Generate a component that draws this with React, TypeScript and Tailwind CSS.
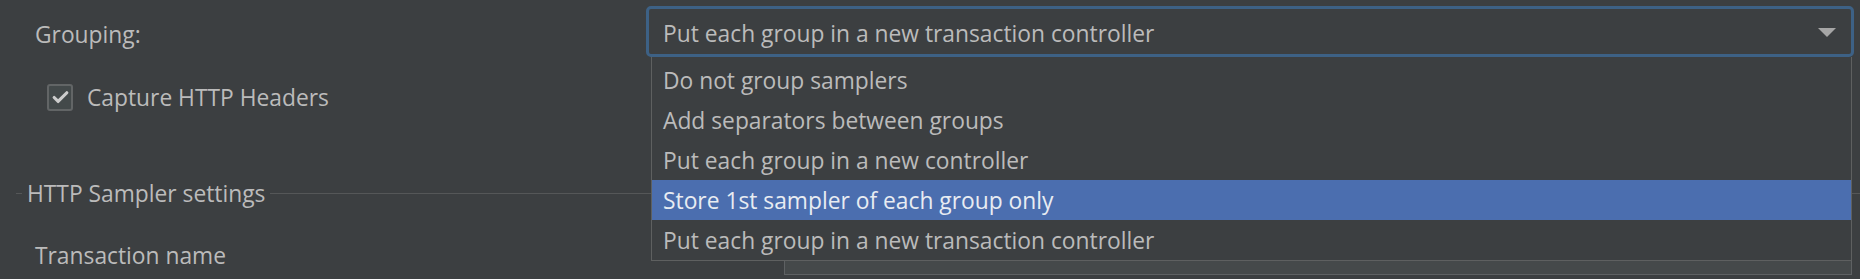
import { Check } from "lucide-react";

const options = [
  "Do not group samplers",
  "Add separators between groups",
  "Put each group in a new controller",
  "Store 1st sampler of each group only",
  "Put each group in a new transaction controller",
];

const font = { fontFamily: '"Open Sans", "Noto Sans", sans-serif' };

export default function App() {
  const selected = 3;

  return (
    <div
      className="relative h-[279px] w-[1860px] overflow-hidden bg-[#3c3f41] text-[22.8px] text-[#bbbbbb]"
      style={font}
    >
      <div className="flex flex-col pt-[6px]">
        {/* Grouping row */}
        <div className="flex items-center">
          <div className="w-[646px] pt-[7px] pl-[35px] leading-none">Grouping:</div>
          <div className="mr-[6px] flex h-[51px] flex-1 items-center rounded-[5px] border-[3px] border-[#3d6185] pr-[15px] pl-[14px]">
            <span className="flex-1 pt-[6px] leading-none">
              Put each group in a new transaction controller
            </span>
            <svg width="18" height="10" viewBox="0 0 18 10" className="mt-[2px]">
              <polygon points="0,0 18,0 9,9" fill="#a6a6a6" />
            </svg>
          </div>
        </div>

        {/* Capture checkbox */}
        <div className="mt-[27px] flex items-center gap-[14px] pl-[47px]">
          <div className="flex h-[27px] w-[26px] items-center justify-center rounded-[3px] border-2 border-[#626566] bg-[#43494a]">
            <Check className="h-[19px] w-[19px] text-[#cccccc]" strokeWidth={4} />
          </div>
          <span className="pt-[2px] leading-none">Capture HTTP Headers</span>
        </div>

        {/* HTTP Sampler settings */}
        <div className="mt-[67px] flex h-[30px] items-center pl-[16px]">
          <div className="h-px w-[6px] bg-[#555758]" />
          <span className="px-[5px] pt-[2px] leading-none">HTTP Sampler settings</span>
          <div className="h-px flex-1 bg-[#555758]" />
        </div>

        <div className="mt-[30px] flex items-center">
          <span className="w-[784px] pl-[35px] leading-none">Transaction name</span>
          <div className="mr-[8px] h-[37px] flex-1 border border-[#5e6163] bg-[#45494a]" />
        </div>
      </div>

      {/* Open dropdown popup */}
      <div className="absolute top-[57px] left-[651px] w-[1201px] border border-t-0 border-[#5e6060] bg-[#3c3f41] pt-[3px]">
        {options.map((opt, i) => (
          <div
            key={opt}
            className={
              i === selected
                ? "flex h-[40px] items-center bg-[#4b6eaf] pt-[2px] pl-[11px] text-[#e8ecf2]"
                : "flex h-[40px] items-center pt-[2px] pl-[11px]"
            }
          >
            {opt}
          </div>
        ))}
      </div>
    </div>
  );
}
